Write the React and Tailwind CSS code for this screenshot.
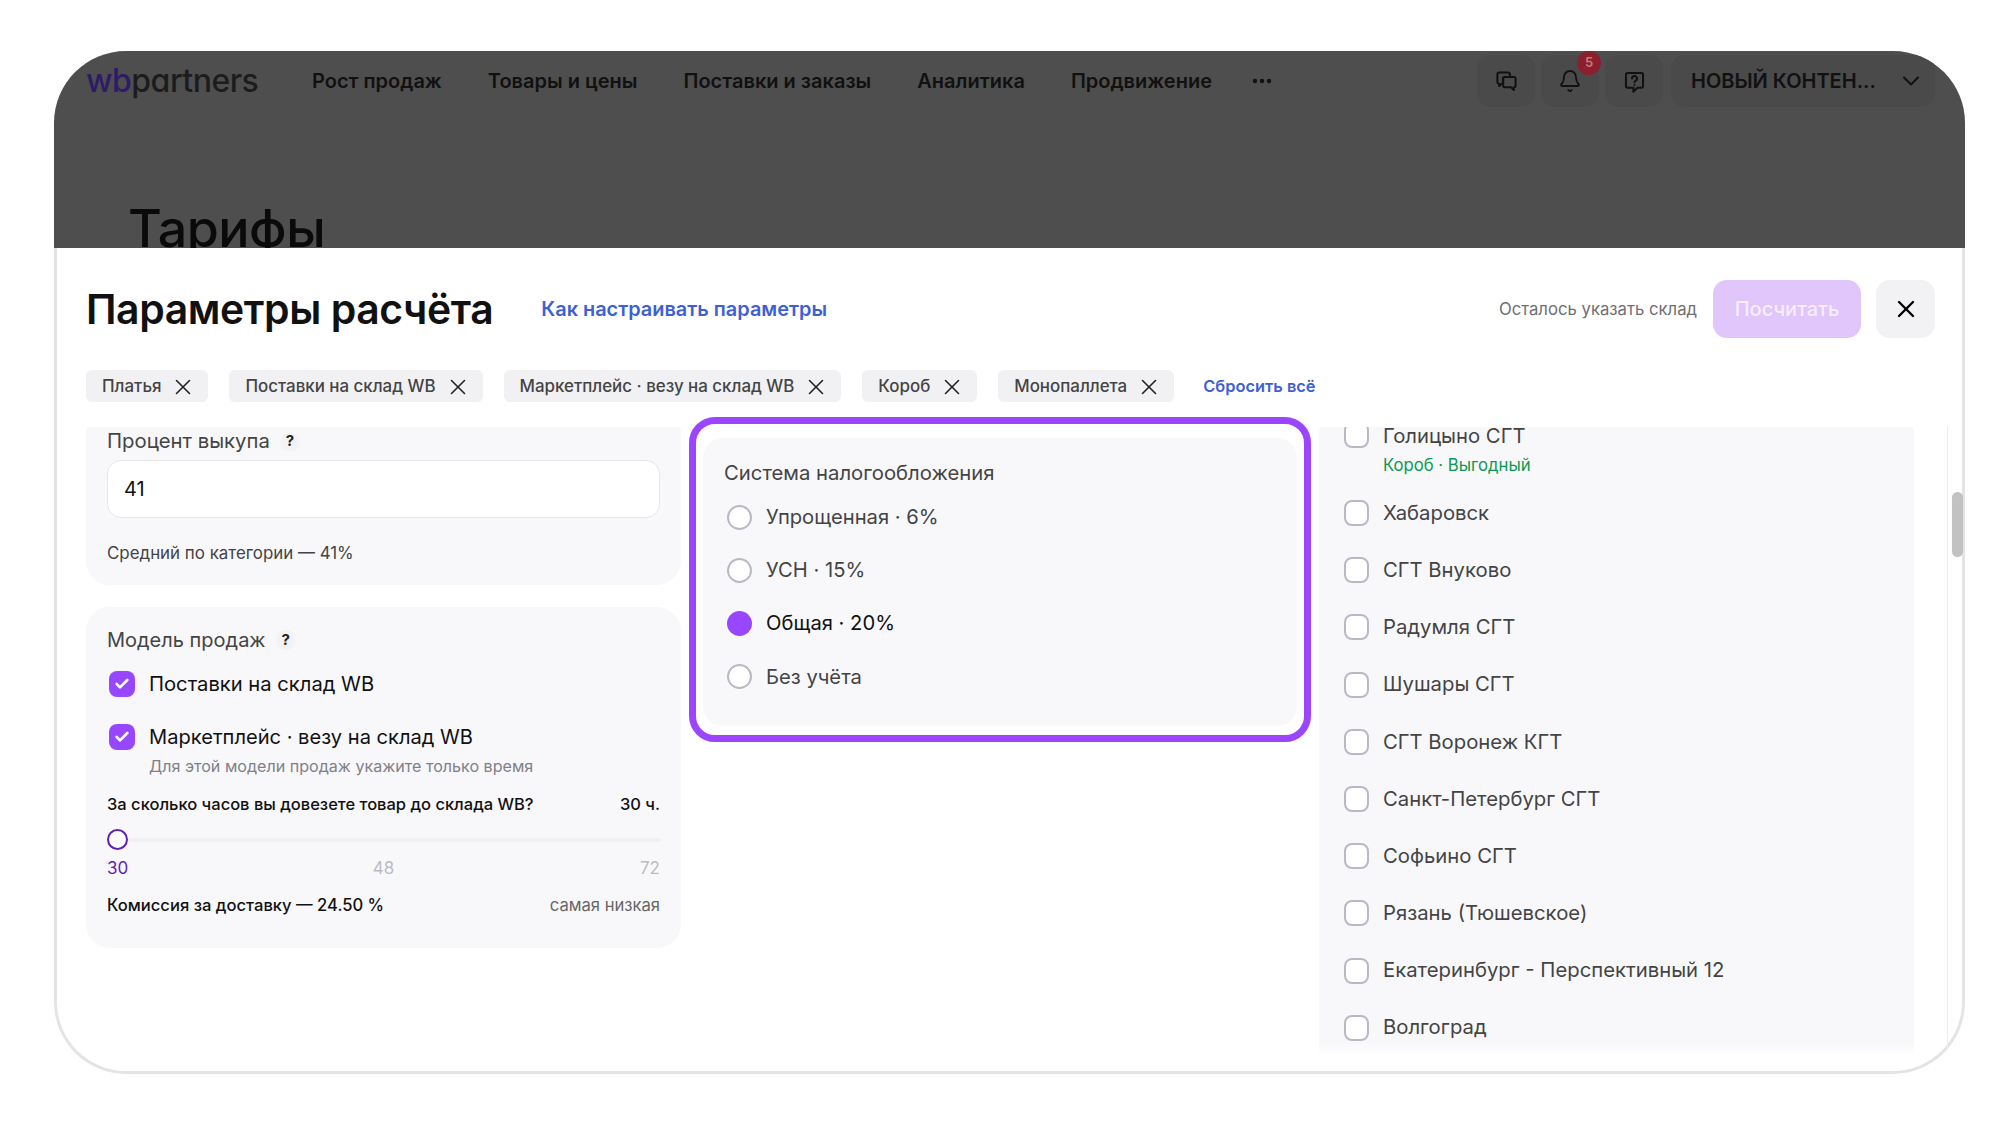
import React from 'react';
import { X, ChevronDown, Bell, Check, Ellipsis } from 'lucide-react';

const NAV = ['Рост продаж', 'Товары и цены', 'Поставки и заказы', 'Аналитика', 'Продвижение'];
const CHIPS = ['Платья', 'Поставки на склад WB', 'Маркетплейс · везу на склад WB', 'Короб', 'Монопаллета'];
const TAXES = [
  { label: 'Упрощенная · 6%' },
  { label: 'УСН · 15%' },
  { label: 'Общая · 20%', active: true },
  { label: 'Без учёта' },
];
const WAREHOUSES = ['Хабаровск', 'СГТ Внуково', 'Радумля СГТ', 'Шушары СГТ', 'СГТ Воронеж КГТ', 'Санкт-Петербург СГТ', 'Софьино СГТ', 'Рязань (Тюшевское)', 'Екатеринбург - Перспективный 12', 'Волгоград'];

const ChatIcon = () => (
  <svg width="25" height="25" viewBox="0 0 22 22" fill="none" stroke="#111" strokeWidth="1.8" strokeLinejoin="round">
    <path d="M3 4.500A1.500 1.500 0 0 1 4.500 3h8A1.500 1.500 0 0 1 14 4.500V7H9.500A1.500 1.500 0 0 0 8 8.500V13H6.500L4.500 15v-2A1.500 1.500 0 0 1 3 11.500z" />
    <path d="M8 8.500A1.500 1.500 0 0 1 9.500 7h8A1.500 1.500 0 0 1 19 8.500v6a1.500 1.500 0 0 1-1.500 1.500V18.500L15 16H9.500A1.500 1.500 0 0 1 8 14.500z" />
  </svg>
);

const HelpIcon = () => (
  <svg width="25" height="25" viewBox="0 0 22 22" fill="none" stroke="#111" strokeWidth="1.8" strokeLinejoin="round" strokeLinecap="round">
    <path d="M3.500 5A1.500 1.500 0 0 1 5 3.500h12A1.500 1.500 0 0 1 18.500 5v10a1.500 1.500 0 0 1-1.500 1.500h-3.500L10 20v-3.500H5A1.500 1.500 0 0 1 3.500 15z" />
    <path d="M8.800 8.300a2.200 2.200 0 1 1 3.300 1.900c-.7.4-1.100.8-1.100 1.500" />
    <path d="M11 14h.01" />
  </svg>
);

const Question = () => (
  <span className="ml-[10px] flex h-[20px] w-[20px] items-center justify-center rounded-full bg-[#f3f3f6] text-[15px] font-bold text-[#222]">?</span>
);

const Checkbox = ({ checked }) =>
  checked ? (
    <span className="flex h-[26px] w-[26px] shrink-0 items-center justify-center rounded-[8px] bg-[#9747ff]">
      <Check size={16} strokeWidth={4} className="text-white" />
    </span>
  ) : (
    <span className="h-[26px] w-[25px] shrink-0 rounded-[8px] border-[2px] border-[#b9b9c6] bg-white" />
  );

export default function App() {
  return (
    <div className="h-[1125px] w-[2016px] overflow-hidden bg-white pl-[54px] pt-[51px] font-['Inter',sans-serif]">
      <div className="flex h-[1023px] w-[1911px] flex-col overflow-hidden rounded-[72px] bg-[#e4e4e4]">
        {/* Dimmed page behind the modal */}
        <div className="h-[197px] shrink-0 overflow-hidden bg-[#4e4e4e]">
          <div className="box-content flex h-[52px] items-center pl-[32px] pr-[30px] pt-[4px]">
            <div className="w-[226px] text-[32px] font-medium leading-none tracking-[-0.5px] text-[#1c1c1e] [font-feature-settings:'cv11']">
              <span className="text-[#2e1a66]">wb</span>partners
            </div>
            <nav className="flex items-center gap-[46px]">
              {NAV.map((item) => (
                <span key={item} className="text-[20px] font-semibold text-[#111]">{item}</span>
              ))}
              <Ellipsis size={24} strokeWidth={2.4} className="-ml-[8px] text-[#111]" />
            </nav>
            <div className="ml-auto flex items-center gap-[6px]">
              <div className="flex h-[52px] w-[58px] items-center justify-center rounded-[14px] bg-[#4a4a4a]">
                <ChatIcon />
              </div>
              <div className="relative flex h-[52px] w-[58px] items-center justify-center rounded-[14px] bg-[#4a4a4a]">
                <Bell size={24} strokeWidth={1.8} className="text-[#111]" />
                <span className="absolute -top-[4px] right-[-2px] flex h-[24px] w-[24px] items-center justify-center rounded-full bg-[#8c1f2e] text-[13px] font-semibold text-[#c77a7f]">5</span>
              </div>
              <div className="flex h-[52px] w-[58px] items-center justify-center rounded-[14px] bg-[#4a4a4a]">
                <HelpIcon />
              </div>
              <div className="ml-[2px] flex h-[52px] w-[264px] items-center justify-between rounded-[14px] bg-[#4a4a4a] pl-[20px] pr-[10px]">
                <span className="text-[20px] font-semibold text-[#111]">НОВЫЙ КОНТЕН...</span>
                <ChevronDown size={28} strokeWidth={1.8} className="text-[#111]" />
              </div>
            </div>
          </div>
          <div className="mt-[87px] pl-[74px] text-[52px] font-medium leading-[70px] tracking-[-0.5px] text-[#0a0a0a]">Тарифы</div>
        </div>

        {/* Modal */}
        <div className="relative mx-[3px] mb-[3px] flex min-h-0 flex-1 flex-col rounded-b-[69px] bg-white">
          <div className="flex items-center pl-[29px] pr-[27px] pt-[32px]">
            <h1 className="text-[40.900px] font-semibold leading-[58px] tracking-[-0.4px] text-[#111]">Параметры расчёта</h1>
            <a className="ml-[48px] pt-[1px] text-[19.900px] font-semibold text-[#3f5fd6]">Как настраивать параметры</a>
            <span className="ml-auto pt-[1px] text-[16.700px] text-[#6e6e73]">Осталось указать склад</span>
            <button className="ml-[16px] h-[58px] w-[148px] rounded-[14px] bg-[#e1c6fc] text-[20px] font-medium text-[#f6edff]">Посчитать</button>
            <button className="ml-[15px] flex h-[58px] w-[59px] items-center justify-center rounded-[14px] bg-[#f2f2f4]">
              <X size={28} strokeWidth={2} className="text-black" />
            </button>
          </div>

          <div className="flex items-center pl-[29px] pt-[32px]">
            {CHIPS.map((chip) => (
              <span key={chip} className="mr-[21px] flex h-[32px] items-center gap-[9px] rounded-[6px] bg-[#f1f1f3] pl-[16px] pr-[12px] pt-[1px] text-[16.900px] font-medium text-[#444]">
                {chip}
                <X size={26} strokeWidth={1.5} className="text-[#222]" />
              </span>
            ))}
            <a className="ml-[8px] text-[16.400px] font-semibold text-[#3f5fd6]">Сбросить всё</a>
          </div>

          <div className="mt-[25px] flex min-h-0 flex-1 pb-[15px] pl-[29px]">
            {/* Left column */}
            <div className="w-[595px] shrink-0 overflow-hidden">
              <div className="-mt-[3px] rounded-b-[24px] bg-[#f8f8fb] px-[21px] pb-[21px] pt-[1px]">
                <div className="flex h-[33px] items-center">
                  <span className="text-[20.300px] text-[#444]">Процент выкупа</span>
                  <Question />
                </div>
                <div className="mt-[2px] flex h-[58px] items-center rounded-[14px] border border-[#e6e6ea] bg-white pl-[16px] text-[20px] text-[#111]">41</div>
                <div className="mt-[24px] text-[16.900px] leading-[22px] text-[#444]">Средний по категории — 41%</div>
              </div>

              <div className="mt-[22px] rounded-[24px] bg-[#f8f8fb] px-[21px] pb-[32px] pt-[19px]">
                <div className="flex h-[28px] items-center">
                  <span className="text-[20px] text-[#444]">Модель продаж</span>
                  <Question />
                </div>
                <div className="mt-[16px] flex items-center gap-[14px] pl-[2px]">
                  <Checkbox checked />
                  <span className="text-[20.200px] leading-[28px] text-[#111]">Поставки на склад WB</span>
                </div>
                <div className="mt-[25px] flex items-center gap-[14px] pl-[2px]">
                  <Checkbox checked />
                  <span className="text-[20.100px] leading-[28px] text-[#111]">Маркетплейс · везу на склад WB</span>
                </div>
                <div className="mt-[4px] pl-[42px] text-[16.100px] leading-[22px] text-[#808088]">Для этой модели продаж укажите только время</div>
                <div className="mt-[16px] flex justify-between text-[16.500px] font-medium leading-[22px] text-[#111]">
                  <span>За сколько часов вы довезете товар до склада WB?</span>
                  <span>30 ч.</span>
                </div>
                <div className="relative mt-[14px] h-[22px]">
                  <div className="absolute left-0 right-0 top-[9px] h-[4px] rounded-full bg-[#f0f0f3]" />
                  <div className="absolute left-0 top-0 h-[21px] w-[21px] rounded-full border-[2px] border-[#5b21b6] bg-white" />
                </div>
                <div className="mt-[6px] grid grid-cols-3 text-[17px] leading-[22px] text-[#bcbcc0]">
                  <span className="text-[#5b1fb8]">30</span>
                  <span className="text-center">48</span>
                  <span className="text-right">72</span>
                </div>
                <div className="mt-[15px] flex justify-between text-[16.600px] leading-[22px]">
                  <span className="font-medium text-[#111]">Комиссия за доставку — 24.50 %</span>
                  <span className="text-[#666]">самая низкая</span>
                </div>
              </div>
            </div>

            {/* Middle column with the highlight frame */}
            <div className="relative ml-[22px] w-[594px] shrink-0">
              <div className="mt-[11px] h-[288px] rounded-[20px] bg-[#f8f8fb] px-[21px] pt-[22px]">
                <div className="text-[20.300px] leading-[26px] text-[#444]">Система налогообложения</div>
                <div className="mt-[17px] flex flex-col gap-[25.300px]">
                  {TAXES.map((tax) => (
                    <div key={tax.label} className="flex h-[28px] items-center gap-[14px] pl-[3px]">
                      {tax.active ? (
                        <span className="h-[25px] w-[25px] rounded-full bg-[#9747ff]" />
                      ) : (
                        <span className="h-[25px] w-[25px] rounded-full border-[2px] border-[#b9b9c6] bg-white" />
                      )}
                      <span className={tax.active ? 'text-[20.200px] text-[#111]' : 'text-[20.200px] text-[#444]'}>{tax.label}</span>
                    </div>
                  ))}
                </div>
              </div>
              <div className="absolute -top-[10px] left-[-14px] right-[-14px] h-[325px] rounded-[26px] border-[7px] border-[#9b45ff]" />
            </div>

            {/* Warehouses */}
            <div className="relative ml-[22px] w-[595px] shrink-0 overflow-hidden bg-[#f8f8fb] pl-[25px]">
              <div className="-mt-[5px] flex items-start gap-[14px]">
                <Checkbox />
                <div>
                  <div className="text-[20.300px] leading-[28px] text-[#444]">Голицыно СГТ</div>
                  <div className="mt-[4px] text-[16.700px] leading-[22px] text-[#0b9a50]">Короб · Выгодный</div>
                </div>
              </div>
              <div className="mt-[23px] flex flex-col gap-[29.200px]">
                {WAREHOUSES.map((name) => (
                  <div key={name} className="flex h-[28px] items-center gap-[14px]">
                    <Checkbox />
                    <span className="text-[20.300px] text-[#444]">{name}</span>
                  </div>
                ))}
              </div>
              <div className="absolute bottom-0 left-0 right-0 h-[14px] bg-gradient-to-b from-transparent to-white" />
            </div>

            {/* Scrollbar */}
            <div className="ml-[33px] flex-1 border-l border-[#ececec] pl-[4px] pt-[65px]">
              <div className="h-[65px] w-[11px] rounded-full bg-[#c2c2c2]" />
            </div>
          </div>
        </div>
      </div>
    </div>
  );
}
